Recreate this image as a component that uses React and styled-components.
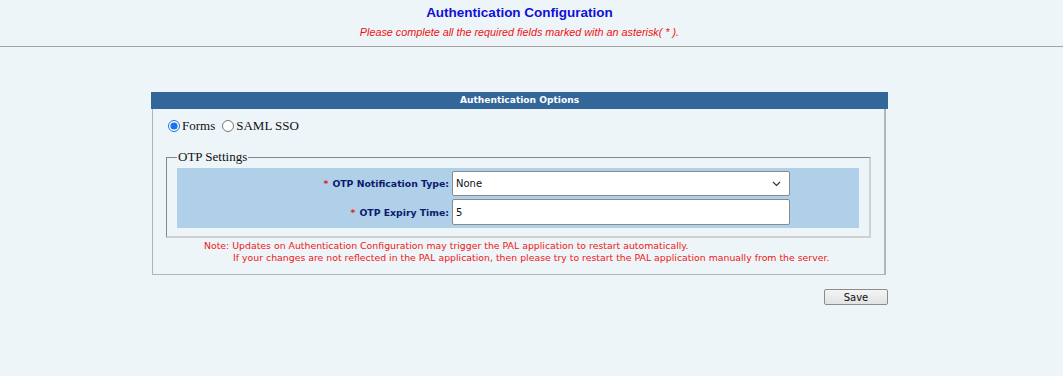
import styled, { createGlobalStyle } from "styled-components";

const Global = createGlobalStyle`
  html, body {
    margin: 0;
    background: #eef5f9;
  }
`;

// Page header

const Header = styled.header`
  text-align: center;
  padding: 4px 24px 0 0;
  height: 42px;
  border-bottom: 1px solid #a3a3a3;
`;

const Title = styled.h1`
  margin: 0;
  font: bold 13.5px "Liberation Sans", Arial, sans-serif;
  color: #1010d8;
  line-height: 17px;
`;

const Hint = styled.p`
  margin: 5px 0 0;
  font: italic 10.8px "Liberation Sans", Arial, sans-serif;
  color: #ee1111;
  line-height: 12px;
`;

// Panel

const Panel = styled.section`
  width: 737px;
  margin: 45px 0 0 151px;
`;

const PanelBar = styled.div`
  height: 17px;
  box-sizing: border-box;
  padding-top: 3px;
  line-height: 14px;
  background: #336699;
  color: #fff;
  text-align: center;
  font: bold 9.1px "DejaVu Sans", Verdana, sans-serif;
`;

const PanelBody = styled.div`
  margin: 0 2px 0 1px;
  height: 157px;
  border: 1px solid #b4b4b4;
  border-top: none;
  border-right-width: 2px;
  padding: 8px 13px 0;
`;

const RadioRow = styled.div`
  display: flex;
  align-items: center;
  font: 13px "Liberation Serif", "Times New Roman", serif;
  color: #111;
  height: 17px;
`;

const Radio = styled.input`
  margin: 0 2px 0 2px;
  width: 12px;
  height: 12px;
  accent-color: #1a73e8;
`;

const Fieldset = styled.fieldset`
  margin: 15px 0 0;
  padding: 3px 10px 8px;
  border-color: #888 #d0d0d0 #d0d0d0 #888;
  border-width: 1px 2px 2px 1px;
  border-style: solid;
`;

const Legend = styled.legend`
  padding: 0 1px;
  margin-left: 0;
  font: 13px "Liberation Serif", "Times New Roman", serif;
  color: #111;
`;

const FormGrid = styled.div`
  display: grid;
  grid-template-columns: 275px 338px 1fr;
  row-gap: 3px;
  align-items: center;
  background: #b0cfe8;
  padding: 3px 0 3px;
`;

const Label = styled.label`
  text-align: right;
  padding-right: 3px;
  font: bold 9.3px "DejaVu Sans", Verdana, sans-serif;
  color: #0c1a6e;
`;

const Star = styled.span`
  color: #e02020;
  margin-right: 4px;
`;

const Field = styled.div`
  grid-column: 2;
  height: ${(p) => p.$h}px;
  box-sizing: border-box;
  background: #fff;
  border: 1px solid #8a8a8a;
  border-radius: 2px;
  display: flex;
  align-items: center;
  justify-content: space-between;
  padding: 0 8px 0 3px;
  font: 10px "DejaVu Sans", Verdana, sans-serif;
  color: #111;
`;

const Spacer = styled.div``;

const Note = styled.div`
  margin: 2px 0 0 38px;
  font: 9.35px "DejaVu Sans", Verdana, sans-serif;
  line-height: 12px;
  color: #ee1515;
`;

const NoteLine = styled.div`
  padding-left: ${(p) => p.$indent || 0}px;
  white-space: nowrap;
`;

const Footer = styled.div`
  display: flex;
  justify-content: flex-end;
  margin-top: 14px;
`;

const Button = styled.button`
  width: 64px;
  height: 16px;
  padding: 0;
  border: 1px solid #8c8c8c;
  border-radius: 2px;
  background: linear-gradient(#f4f4f4, #e2e2e2);
  font: 10px "DejaVu Sans", Verdana, sans-serif;
  color: #111;
`;

const Chevron = () => (
  <svg width="9" height="6" viewBox="0 0 9 6">
    <path d="M1 1l3.5 3.5L8 1" fill="none" stroke="#333" strokeWidth="1.2" />
  </svg>
);

export default function App() {
  return (
    <>
      <Global />
      <Header>
        <Title>Authentication Configuration</Title>
        <Hint>Please complete all the required fields marked with an asterisk( * ).</Hint>
      </Header>
      <Panel>
        <PanelBar>Authentication Options</PanelBar>
        <PanelBody>
          <RadioRow>
            <Radio type="radio" name="auth" defaultChecked />
            Forms
            <Radio type="radio" name="auth" style={{ marginLeft: 7 }} />
            SAML SSO
          </RadioRow>
          <Fieldset>
            <Legend>OTP Settings</Legend>
            <FormGrid>
              <Label>
                <Star>*</Star>OTP Notification Type:
              </Label>
              <Field $h={25}>
                None
                <Chevron />
              </Field>
              <Spacer />
              <Label>
                <Star>*</Star>OTP Expiry Time:
              </Label>
              <Field $h={26}>5</Field>
              <Spacer />
            </FormGrid>
          </Fieldset>
          <Note>
            <NoteLine>
              Note: Updates on Authentication Configuration may trigger the PAL application to restart automatically.
            </NoteLine>
            <NoteLine $indent={29}>
              If your changes are not reflected in the PAL application, then please try to restart the PAL application manually from the server.
            </NoteLine>
          </Note>
        </PanelBody>
        <Footer>
          <Button>Save</Button>
        </Footer>
      </Panel>
    </>
  );
}
